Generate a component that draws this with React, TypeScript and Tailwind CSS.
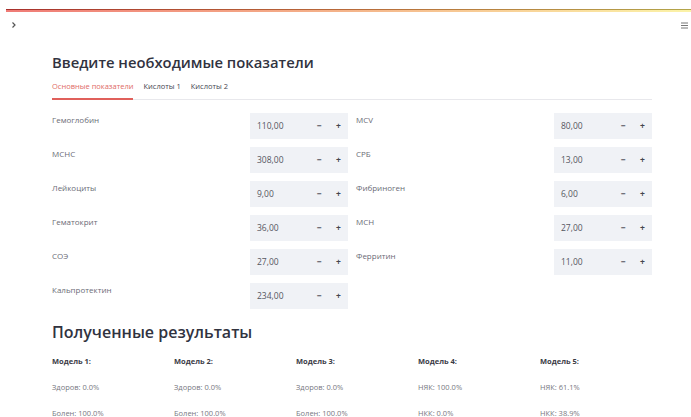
const INPUTS: [string, string, string, string][] = [
  ["Гемоглобин", "110,00", "MCV", "80,00"],
  ["МСНС", "308,00", "СРБ", "13,00"],
  ["Лейкоциты", "9,00", "Фибриноген", "6,00"],
  ["Гематокрит", "36,00", "МСН", "27,00"],
  ["СОЭ", "27,00", "Ферритин", "11,00"],
];

const MODELS: { title: string; lines: string[] }[] = [
  { title: "Модель 1:", lines: ["Здоров: 0.0%", "Болен: 100.0%"] },
  { title: "Модель 2:", lines: ["Здоров: 0.0%", "Болен: 100.0%"] },
  { title: "Модель 3:", lines: ["Здоров: 0.0%", "Болен: 100.0%"] },
  { title: "Модель 4:", lines: ["НЯК: 100.0%", "НКК: 0.0%"] },
  { title: "Модель 5:", lines: ["НЯК: 61.1%", "НКК: 38.9%"] },
];

function NumberField({ label, value }: { label: string; value: string }) {
  return (
    <div className="flex h-[26px] items-start">
      <div className="flex-1 pt-[1px] text-[8px] leading-[12px] text-[#6b6c76]">{label}</div>
      <div className="flex h-[26px] w-[98px] items-center bg-[#f0f2f6] text-[8.5px] text-[#55565f]">
        <span className="flex-1 pl-[7px]">{value}</span>
        <span className="w-[19px] text-center font-bold leading-none text-[#44454f]">−</span>
        <span className="w-[19px] text-center font-bold leading-none text-[#44454f]">+</span>
      </div>
    </div>
  );
}

export default function App() {
  return (
    <div
      className="h-[417px] w-[691px] overflow-hidden bg-white"
      style={{ fontFamily: '"Open Sans", "Noto Sans", sans-serif' }}
    >
      {/* decoration strip */}
      <div className="ml-[6px] pt-[9px]">
        <div className="h-px bg-gradient-to-r from-[#a8302c] via-[#b86a3a] to-[#b3a54a]" />
        <div className="h-[2px] bg-gradient-to-r from-[#ef7b76] via-[#f4b48a] to-[#fbf3a8]" />
      </div>

      {/* toolbar */}
      <div className="flex h-[26px] items-center justify-between pl-[11px] pr-[3px]">
        <svg width="6" height="8" viewBox="0 0 6 8" className="text-[#555]">
          <path d="M1.5 1.5 L4 4 L1.5 6.5" fill="none" stroke="currentColor" strokeWidth="1.2" />
        </svg>
        <svg width="7" height="7" viewBox="0 0 7 7" className="text-[#777]">
          <path d="M0 1 H7 M0 3.5 H7 M0 6 H7" stroke="currentColor" strokeWidth="1" />
        </svg>
      </div>

      <main className="ml-[52px] w-[600px]">
        <h1 className="mt-[14px] text-[14.8px] font-semibold leading-[20px] text-[#31333f]">
          Введите необходимые показатели
        </h1>

        <div className="mt-[8px] flex gap-[10px] border-b border-[#e8e8ec] text-[7.5px] leading-[12px]">
          <div className="-mb-px border-b-2 border-[#e0605b] pb-[6px] text-[#e06a66]">Основные показатели</div>
          <div className="pb-[7px] text-[#44454f]">Кислоты 1</div>
          <div className="pb-[7px] text-[#44454f]">Кислоты 2</div>
        </div>

        <div className="mt-[13px] grid grid-cols-2 gap-x-[8px] gap-y-[8px]">
          {INPUTS.map(([l1, v1, l2, v2]) => (
            <>
              <NumberField key={l1} label={l1} value={v1} />
              <NumberField key={l2} label={l2} value={v2} />
            </>
          ))}
          <NumberField label="Кальпротектин" value="234,00" />
        </div>

        <h2 className="mt-[13px] text-[16px] font-semibold leading-[20px] text-[#31333f]">
          Полученные результаты
        </h2>

        <div className="mt-[13px] grid w-[610px] grid-cols-5 text-[7.5px] leading-[12px]">
          {MODELS.map((m) => (
            <div key={m.title} className="flex flex-col gap-[14px]">
              <div className="font-bold text-[#3a3b45]">{m.title}</div>
              {m.lines.map((t) => (
                <div key={t} className="text-[#777881]">
                  {t}
                </div>
              ))}
            </div>
          ))}
        </div>
      </main>
    </div>
  );
}
